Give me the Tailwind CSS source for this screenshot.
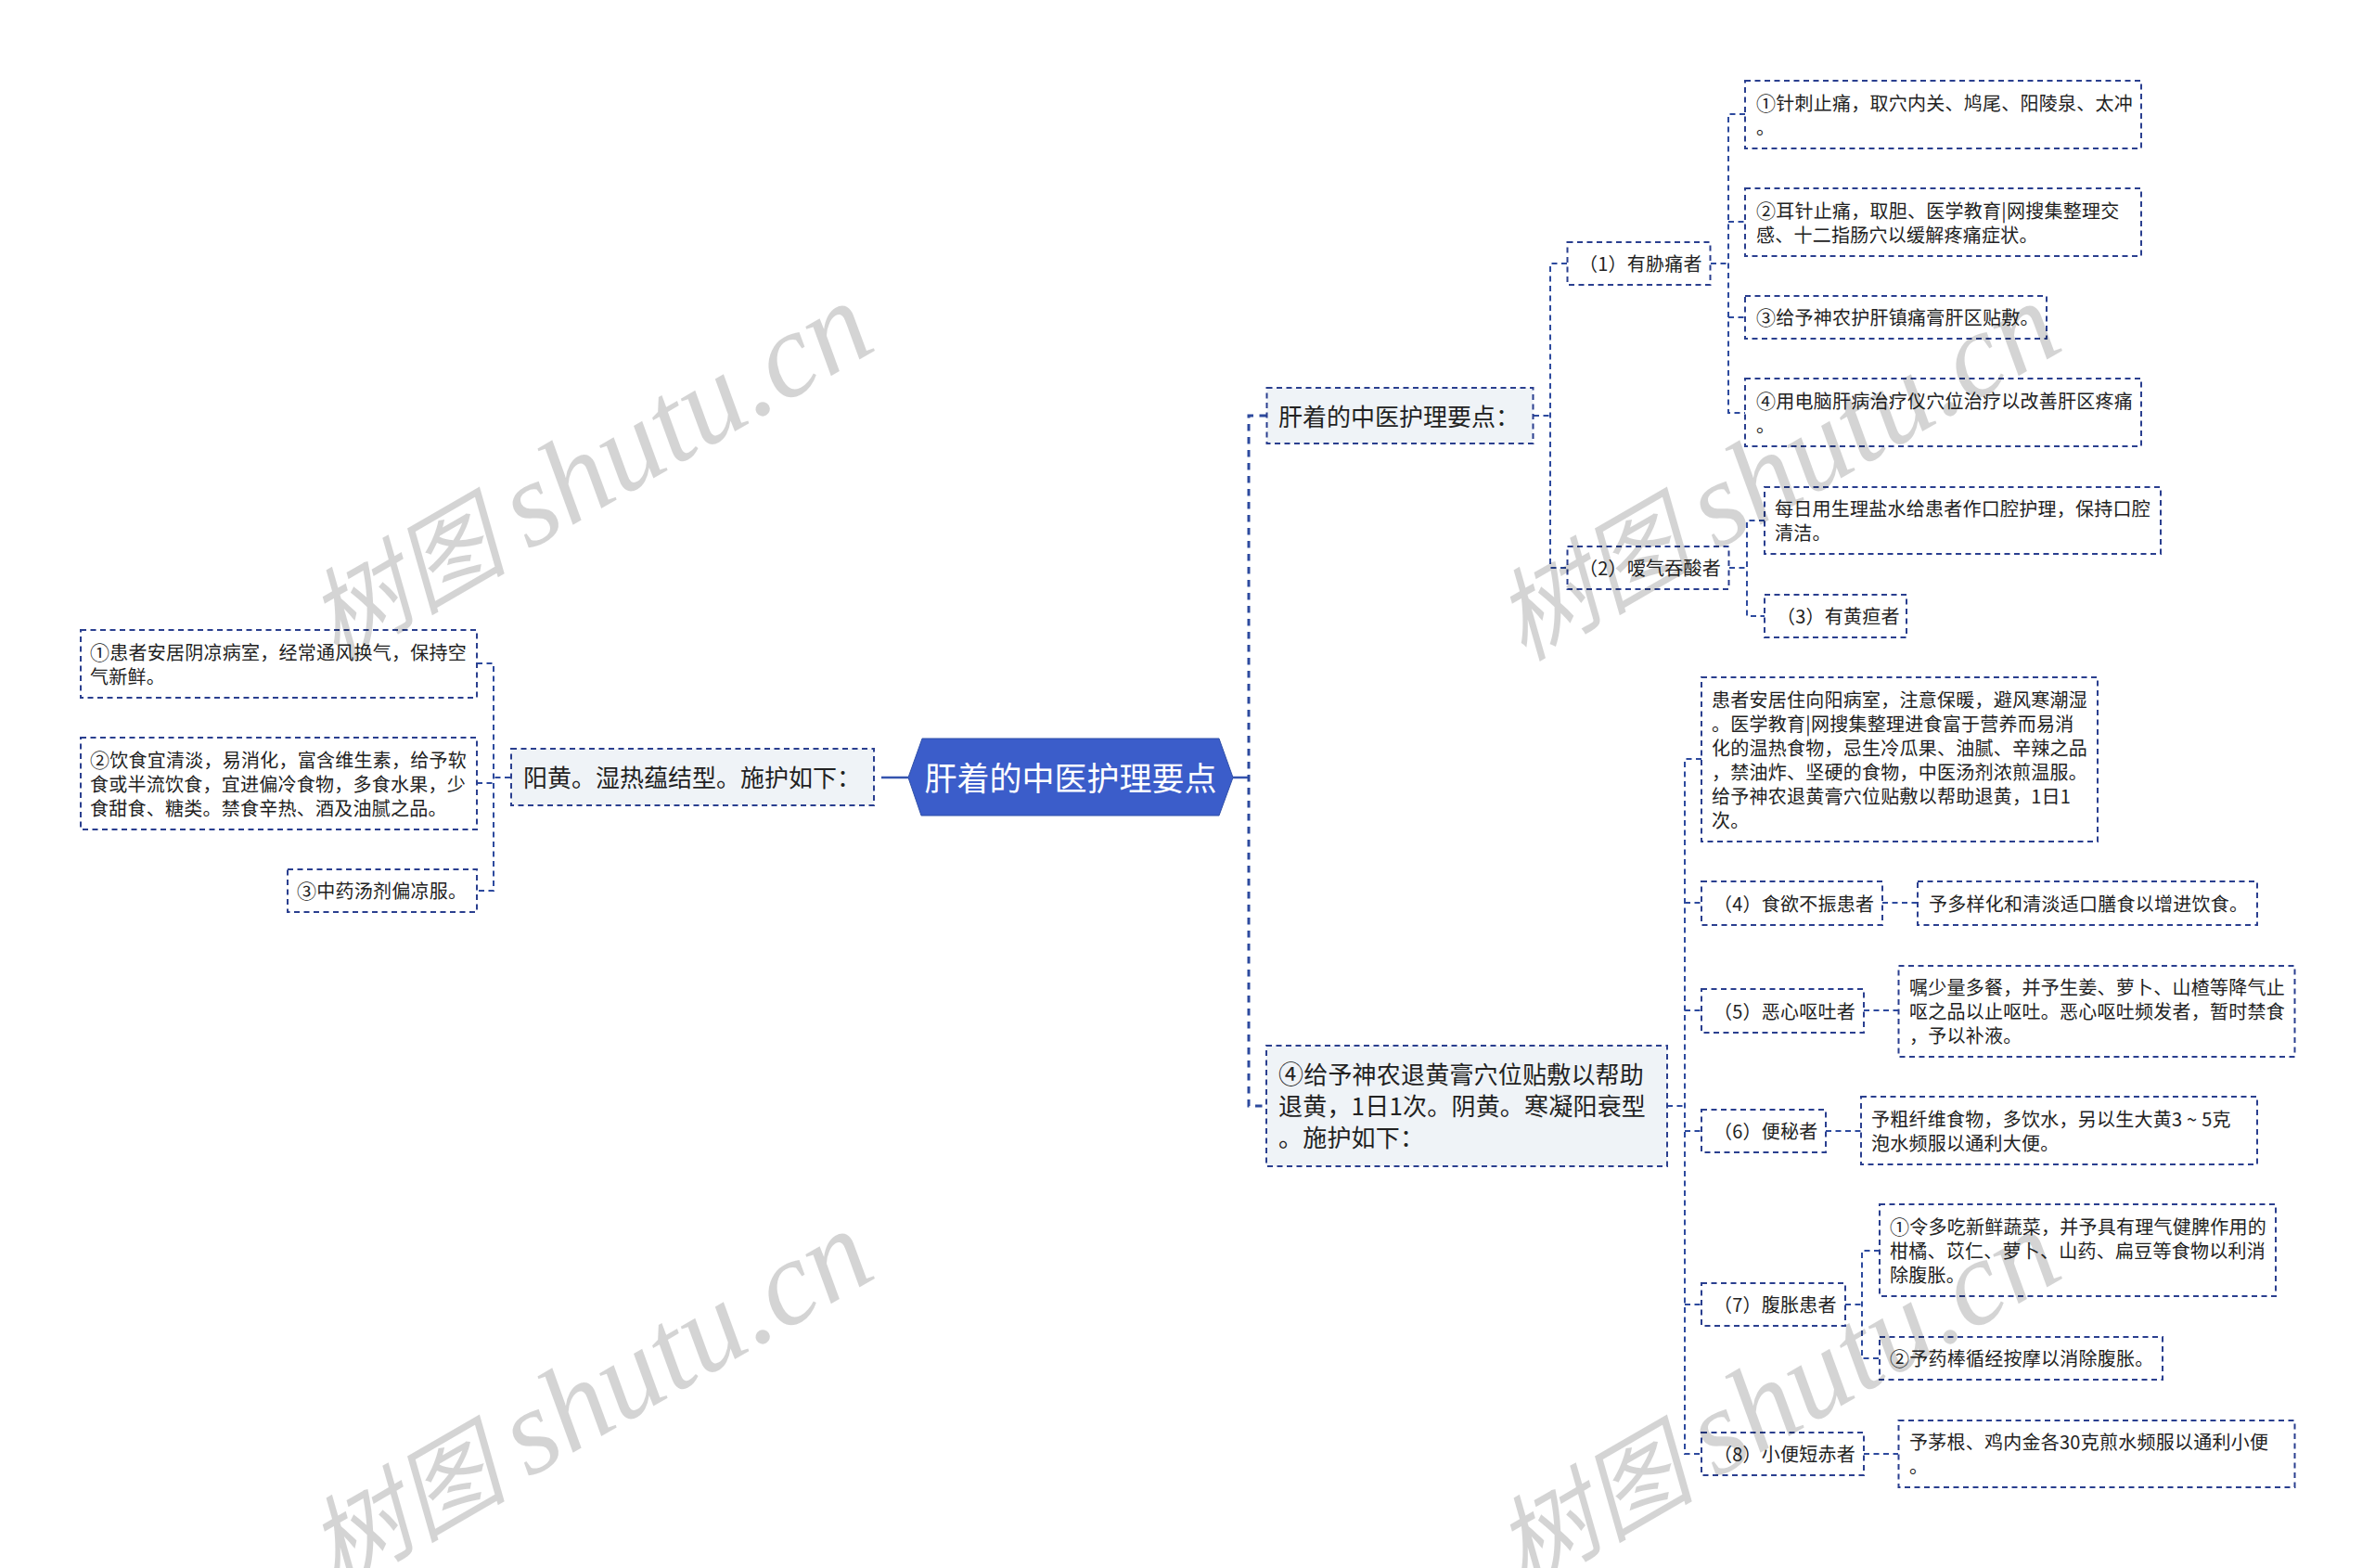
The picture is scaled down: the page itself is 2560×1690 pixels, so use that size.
<!DOCTYPE html>
<html lang="zh-CN">
  <head>
    <meta charset="UTF-8" />
    <title>肝着的中医护理要点</title>
    <script src="https://cdn.jsdelivr.net/npm/@tailwindcss/browser@4"></script>
  </head>
  <body class="bg-white">
    <!-- Mind map canvas -->
    <div class="relative w-[2560px] h-[1690px] overflow-hidden bg-white text-[#222222] font-['Noto_Sans_CJK_SC',sans-serif] text-[20px] leading-[26px] tracking-[0.25px]">
      <!-- Connectors and node frames -->
      <svg class="absolute left-0 top-0" width="2560" height="1690" viewBox="0 0 2560 1690" fill="none">
        <!-- root hexagon -->
        <polygon points="994,796 1314,796 1329,838 1314,879 993,879 979,838" fill="#3b5dca" stroke="#2f4fa8" stroke-width="1" />
        <path d="M1329 838H1346M950 838H979" stroke="#3453ae" stroke-width="2.5" />
        <path d="M1365 448H1346V1192H1365" stroke="#2d4a9e" stroke-width="3" stroke-dasharray="7.5 6.5" />

        <!-- connectors -->
        <g stroke="#2d4a9e" stroke-width="2" stroke-dasharray="6 4.5">
          <path d="M1653 448H1671M1689 284H1671V612H1689" />
          <path d="M1844 284H1863M1881 123H1863V445H1881M1863 239H1881M1863 342H1881" />
          <path d="M1864 612H1883M1902 561H1883V664H1902" />
          <path d="M1797 1192H1816M1834 818H1816V1567H1834M1816 973H1834M1816 1089H1834M1816 1219H1834M1816 1406H1834" />
          <path d="M2029 973H2067M2009 1089H2046M1968 1219H2006M2009 1567H2046" />
          <path d="M1989 1406H2007M2026 1348H2007V1464H2026" />
          <path d="M550 838H532M514 715H532V960H514M514 844H532" />
        </g>

        <!-- node frames -->
        <g stroke="#2a3f8f" stroke-width="2" stroke-dasharray="6 4.5">
          <rect x="1365.5" y="418" width="287" height="60" fill="#eff3f7" />
          <rect x="1365" y="1127" width="432" height="130" fill="#eff3f7" />
          <rect x="551" y="807" width="391" height="61" fill="#eff3f7" />
          <rect x="1689.5" y="261" width="154" height="46" />
          <rect x="1689.5" y="589" width="174" height="46" />
          <rect x="1881" y="87" width="427" height="73" />
          <rect x="1881" y="203" width="427" height="73" />
          <rect x="1881" y="319" width="325" height="46" />
          <rect x="1881" y="408" width="427" height="73" />
          <rect x="1902" y="525" width="427" height="72" />
          <rect x="1902" y="641" width="153" height="46" />
          <rect x="1834" y="730" width="427" height="177" />
          <rect x="1834" y="950" width="195" height="47" />
          <rect x="2067" y="950" width="366" height="47" />
          <rect x="1834" y="1066" width="175" height="47" />
          <rect x="2046.5" y="1041" width="427" height="98" />
          <rect x="1834" y="1196" width="134" height="46" />
          <rect x="2006" y="1182" width="427" height="73" />
          <rect x="1834" y="1383" width="155" height="46" />
          <rect x="2026" y="1298" width="427" height="99" />
          <rect x="2026" y="1441" width="305" height="46" />
          <rect x="1834" y="1544" width="175" height="46" />
          <rect x="2046.5" y="1531" width="427" height="72" />
          <rect x="87" y="679" width="427" height="73" />
          <rect x="87" y="795" width="427" height="99" />
          <rect x="310" y="937" width="204" height="46" />
        </g>
      </svg>

      <!-- Root -->
      <div class="absolute left-[979px] top-[795px] w-[350px] h-[83px] flex items-center justify-center whitespace-nowrap text-white text-[35px] leading-[44px] tracking-normal">肝着的中医护理要点</div>

      <!-- First level -->
      <div class="absolute left-[1365px] top-[418px] w-[288px] h-[60px] flex items-center pl-[13px] whitespace-nowrap text-[26px] leading-[34px] tracking-normal">肝着的中医护理要点：</div>
      <div class="absolute left-[1365px] top-[1126px] w-[432px] h-[130px] flex items-center pl-[13px] whitespace-nowrap text-[26px] leading-[34px] tracking-[0.2px]"><p><span class="text-[27px] leading-[0]">④</span>给予神农退黄膏穴位贴敷以帮助<br />退黄，1日1次。阴黄。寒凝阳衰型<br />。施护如下：</p></div>
      <div class="absolute left-[551px] top-[806px] w-[391px] h-[61px] flex items-center pl-[13px] whitespace-nowrap text-[26px] leading-[34px] tracking-normal">阳黄。湿热蕴结型。施护如下：</div>

      <!-- Upper right branch -->
      <div class="absolute left-[1690px] top-[261px] w-[154px] h-[46px] flex items-center pl-[12px] whitespace-nowrap">（1）有胁痛者</div>
      <div class="absolute left-[1690px] top-[589px] w-[174px] h-[46px] flex items-center pl-[12px] whitespace-nowrap">（2）嗳气吞酸者</div>
      <div class="absolute left-[1881px] top-[87px] w-[427px] h-[73px] flex items-center pl-[12px] whitespace-nowrap"><p><span class="text-[21px] leading-[0]">①</span>针刺止痛，取穴内关、鸠尾、阳陵泉、太冲<br />。</p></div>
      <div class="absolute left-[1881px] top-[203px] w-[427px] h-[73px] flex items-center pl-[12px] whitespace-nowrap"><p><span class="text-[21px] leading-[0]">②</span>耳针止痛，取胆、医学教育|网搜集整理交<br />感、十二指肠穴以缓解疼痛症状。</p></div>
      <div class="absolute left-[1881px] top-[319px] w-[325px] h-[46px] flex items-center pl-[12px] whitespace-nowrap"><p><span class="text-[21px] leading-[0]">③</span>给予神农护肝镇痛膏肝区贴敷。</p></div>
      <div class="absolute left-[1881px] top-[408px] w-[427px] h-[73px] flex items-center pl-[12px] whitespace-nowrap"><p><span class="text-[21px] leading-[0]">④</span>用电脑肝病治疗仪穴位治疗以改善肝区疼痛<br />。</p></div>
      <div class="absolute left-[1902px] top-[525px] w-[427px] h-[72px] flex items-center pl-[11px] whitespace-nowrap"><p>每日用生理盐水给患者作口腔护理，保持口腔<br />清洁。</p></div>
      <div class="absolute left-[1902px] top-[641px] w-[153px] h-[46px] flex items-center pl-[13px] whitespace-nowrap">（3）有黄疸者</div>

      <!-- Lower right branch -->
      <div class="absolute left-[1834px] top-[730px] w-[427px] h-[177px] flex items-center pl-[11px] whitespace-nowrap"><p>患者安居住向阳病室，注意保暖，避风寒潮湿<br />。医学教育|网搜集整理进食富于营养而易消<br />化的温热食物，忌生冷瓜果、油腻、辛辣之品<br />，禁油炸、坚硬的食物，中医汤剂浓煎温服。<br />给予神农退黄膏穴位贴敷以帮助退黄，1日1<br />次。</p></div>
      <div class="absolute left-[1834px] top-[950px] w-[195px] h-[47px] flex items-center pl-[13px] whitespace-nowrap">（4）食欲不振患者</div>
      <div class="absolute left-[2067px] top-[950px] w-[366px] h-[47px] flex items-center pl-[12px] whitespace-nowrap">予多样化和清淡适口膳食以增进饮食。</div>
      <div class="absolute left-[1834px] top-[1066px] w-[175px] h-[47px] flex items-center pl-[13px] whitespace-nowrap">（5）恶心呕吐者</div>
      <div class="absolute left-[2047px] top-[1041px] w-[427px] h-[98px] flex items-center pl-[11px] whitespace-nowrap"><p>嘱少量多餐，并予生姜、萝卜、山楂等降气止<br />呕之品以止呕吐。恶心呕吐频发者，暂时禁食<br />，予以补液。</p></div>
      <div class="absolute left-[1834px] top-[1196px] w-[134px] h-[46px] flex items-center pl-[13px] whitespace-nowrap">（6）便秘者</div>
      <div class="absolute left-[2006px] top-[1182px] w-[427px] h-[73px] flex items-center pl-[11px] whitespace-nowrap"><p>予粗纤维食物，多饮水，另以生大黄3 ~ 5克<br />泡水频服以通利大便。</p></div>
      <div class="absolute left-[1834px] top-[1383px] w-[155px] h-[46px] flex items-center pl-[13px] whitespace-nowrap">（7）腹胀患者</div>
      <div class="absolute left-[2026px] top-[1298px] w-[427px] h-[99px] flex items-center pl-[11px] whitespace-nowrap"><p><span class="text-[21px] leading-[0]">①</span>令多吃新鲜蔬菜，并予具有理气健脾作用的<br />柑橘、苡仁、萝卜、山药、扁豆等食物以利消<br />除腹胀。</p></div>
      <div class="absolute left-[2026px] top-[1441px] w-[305px] h-[46px] flex items-center pl-[11px] whitespace-nowrap"><p><span class="text-[21px] leading-[0]">②</span>予药棒循经按摩以消除腹胀。</p></div>
      <div class="absolute left-[1834px] top-[1544px] w-[175px] h-[46px] flex items-center pl-[13px] whitespace-nowrap">（8）小便短赤者</div>
      <div class="absolute left-[2047px] top-[1531px] w-[427px] h-[72px] flex items-center pl-[11px] whitespace-nowrap"><p>予茅根、鸡内金各30克煎水频服以通利小便<br />。</p></div>

      <!-- Left branch -->
      <div class="absolute left-[87px] top-[679px] w-[427px] h-[73px] flex items-center pl-[10px] whitespace-nowrap"><p><span class="text-[21px] leading-[0]">①</span>患者安居阴凉病室，经常通风换气，保持空<br />气新鲜。</p></div>
      <div class="absolute left-[87px] top-[795px] w-[427px] h-[99px] flex items-center pl-[10px] whitespace-nowrap"><p><span class="text-[21px] leading-[0]">②</span>饮食宜清淡，易消化，富含维生素，给予软<br />食或半流饮食，宜进偏冷食物，多食水果，少<br />食甜食、糖类。禁食辛热、酒及油腻之品。</p></div>
      <div class="absolute left-[310px] top-[937px] w-[204px] h-[46px] flex items-center pl-[10px] whitespace-nowrap"><p><span class="text-[21px] leading-[0]">③</span>中药汤剂偏凉服。</p></div>

      <!-- Watermarks -->
      <div class="absolute left-[333px] top-[431px] w-[600px] h-[150px] flex items-baseline justify-center gap-[24px] whitespace-nowrap -rotate-30 pointer-events-none text-black/17 italic leading-[150px] tracking-normal font-['Liberation_Serif','Noto_Sans_CJK_SC',serif]"><span class="text-[108px]">树图</span><span class="text-[130px]">shutu.cn</span></div>
      <div class="absolute left-[1613px] top-[431px] w-[600px] h-[150px] flex items-baseline justify-center gap-[24px] whitespace-nowrap -rotate-30 pointer-events-none text-black/17 italic leading-[150px] tracking-normal font-['Liberation_Serif','Noto_Sans_CJK_SC',serif]"><span class="text-[108px]">树图</span><span class="text-[130px]">shutu.cn</span></div>
      <div class="absolute left-[333px] top-[1431px] w-[600px] h-[150px] flex items-baseline justify-center gap-[24px] whitespace-nowrap -rotate-30 pointer-events-none text-black/17 italic leading-[150px] tracking-normal font-['Liberation_Serif','Noto_Sans_CJK_SC',serif]"><span class="text-[108px]">树图</span><span class="text-[130px]">shutu.cn</span></div>
      <div class="absolute left-[1613px] top-[1431px] w-[600px] h-[150px] flex items-baseline justify-center gap-[24px] whitespace-nowrap -rotate-30 pointer-events-none text-black/17 italic leading-[150px] tracking-normal font-['Liberation_Serif','Noto_Sans_CJK_SC',serif]"><span class="text-[108px]">树图</span><span class="text-[130px]">shutu.cn</span></div>
    </div>
  </body>
</html>
